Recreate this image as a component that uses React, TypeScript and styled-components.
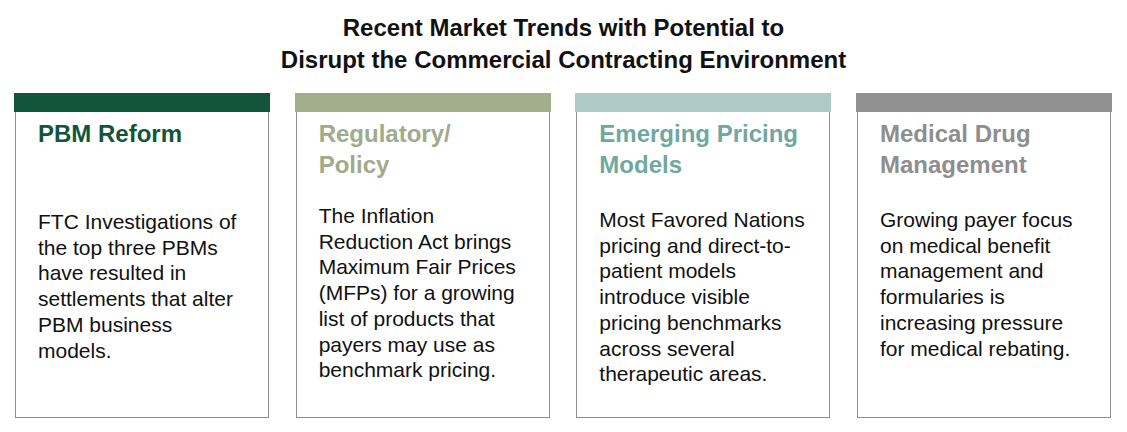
import React from "react";
import styled, { createGlobalStyle } from "styled-components";

const Global = createGlobalStyle`
  html, body { margin: 0; padding: 0; background: #ffffff; }
  body { font-family: "Liberation Sans", Arial, sans-serif; color: #111111; }
`;

const Page = styled.div`
  width: 1127px;
  height: 432px;
  box-sizing: border-box;
  padding-top: 12px;
  display: flex;
  flex-direction: column;
  overflow: hidden;
`;

const Title = styled.h1`
  margin: 0;
  font-size: 24px;
  line-height: 32px;
  font-weight: 700;
  text-align: center;
  color: #111111;
`;

const Row = styled.div`
  margin-top: 17px;
  padding: 0 15px 0 14px;
  display: flex;
  justify-content: space-between;
`;

const Card = styled.div`
  width: 256px;
  height: 325px;
  display: flex;
  flex-direction: column;
`;

const Bar = styled.div<{ $color: string }>`
  height: 19px;
  flex: none;
  background: ${(p) => p.$color};
`;

const Box = styled.div`
  flex: 1;
  margin: 0 1px;
  border: 1px solid #8f8f8f;
  border-top: none;
  padding: 6px 20px 0 22px;
`;

const Heading = styled.h2<{ $color: string }>`
  margin: 0;
  min-height: 62px;
  font-size: 24px;
  line-height: 31px;
  font-weight: 700;
  color: ${(p) => p.$color};
  white-space: nowrap;
`;

const Body = styled.p<{ $offset: number }>`
  margin: ${(p) => p.$offset}px 0 0 0;
  font-size: 21px;
  line-height: 25.7px;
  color: #111111;
  white-space: nowrap;
`;

type Item = {
  bar: string;
  color: string;
  title: string[];
  lines: string[];
  offset: number;
};

const items: Item[] = [
  {
    bar: "#12553b",
    color: "#12553b",
    title: ["PBM Reform"],
    lines: [
      "FTC Investigations of",
      "the top three PBMs",
      "have resulted in",
      "settlements that alter",
      "PBM business",
      "models.",
    ],
    offset: 29,
  },
  {
    bar: "#a2ae8c",
    color: "#a0ab8a",
    title: ["Regulatory/", "Policy"],
    lines: [
      "The Inflation",
      "Reduction Act brings",
      "Maximum Fair Prices",
      "(MFPs) for a growing",
      "list of products that",
      "payers may use as",
      "benchmark pricing.",
    ],
    offset: 23,
  },
  {
    bar: "#afcbc7",
    color: "#6fa8a0",
    title: ["Emerging Pricing", "Models"],
    lines: [
      "Most Favored Nations",
      "pricing and direct-to-",
      "patient models",
      "introduce visible",
      "pricing benchmarks",
      "across several",
      "therapeutic areas.",
    ],
    offset: 27,
  },
  {
    bar: "#919191",
    color: "#8e8e8e",
    title: ["Medical Drug", "Management"],
    lines: [
      "Growing payer focus",
      "on medical benefit",
      "management and",
      "formularies is",
      "increasing pressure",
      "for medical rebating.",
    ],
    offset: 27,
  },
];

const withBreaks = (lines: string[]) =>
  lines.map((l, i) => (
    <React.Fragment key={i}>
      {l}
      {i < lines.length - 1 && <br />}
    </React.Fragment>
  ));

export default function App() {
  return (
    <>
      <Global />
      <Page>
        <Title>
          Recent Market Trends with Potential to
          <br />
          Disrupt the Commercial Contracting Environment
        </Title>
        <Row>
          {items.map((it) => (
            <Card key={it.title.join(" ")}>
              <Bar $color={it.bar} />
              <Box>
                <Heading $color={it.color}>{withBreaks(it.title)}</Heading>
                <Body $offset={it.offset}>{withBreaks(it.lines)}</Body>
              </Box>
            </Card>
          ))}
        </Row>
      </Page>
    </>
  );
}
